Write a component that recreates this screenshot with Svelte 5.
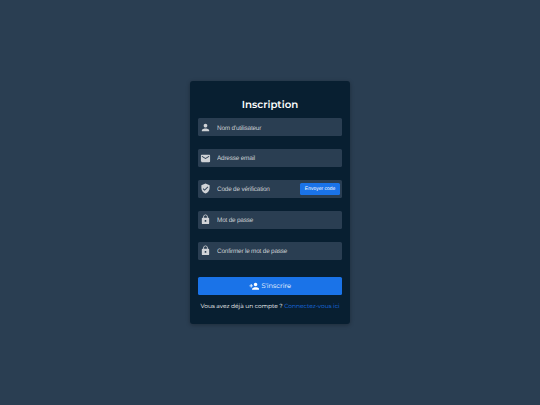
<script lang="ts">
	const icons = {
		person:
			'M12 12c2.21 0 4-1.79 4-4s-1.79-4-4-4-4 1.79-4 4 1.79 4 4 4zm0 2c-2.67 0-8 1.34-8 4v2h16v-2c0-2.66-5.33-4-8-4z',
		mail: 'M20 4H4c-1.1 0-1.99.9-1.99 2L2 18c0 1.1.9 2 2 2h16c1.1 0 2-.9 2-2V6c0-1.1-.9-2-2-2zm0 4l-8 5-8-5V6l8 5 8-5v2z',
		shield:
			'M12 1L3 5v6c0 5.55 3.84 10.74 9 12 5.16-1.26 9-6.45 9-12V5l-9-4zm-2 16l-4-4 1.41-1.41L10 14.17l6.59-6.59L18 9l-8 8z',
		lock: 'M18 8h-1V6c0-2.76-2.24-5-5-5S7 3.24 7 6v2H6c-1.1 0-2 .9-2 2v10c0 1.1.9 2 2 2h12c1.1 0 2-.9 2-2V10c0-1.1-.9-2-2-2zm-6 9c-1.1 0-2-.9-2-2s.9-2 2-2 2 .9 2 2-.9 2-2 2zm3.1-9H8.9V6c0-1.71 1.39-3.1 3.1-3.1 1.71 0 3.1 1.39 3.1 3.1v2z',
		personAdd:
			'M15 12c2.21 0 4-1.79 4-4s-1.79-4-4-4-4 1.79-4 4 1.79 4 4 4zm-9-2V7H4v3H1v2h3v3h2v-3h3v-2H6zm9 4c-2.67 0-8 1.34-8 4v2h16v-2c0-2.66-5.33-4-8-4z'
	};

	const fields = [
		{ name: 'username', type: 'text', label: "Nom d'utilisateur", icon: icons.person },
		{ name: 'email', type: 'email', label: 'Adresse email', icon: icons.mail },
		{ name: 'code', type: 'text', label: 'Code de vérification', icon: icons.shield },
		{ name: 'password', type: 'password', label: 'Mot de passe', icon: icons.lock },
		{ name: 'confirm', type: 'password', label: 'Confirmer le mot de passe', icon: icons.lock }
	];

	let values = $state<Record<string, string>>({});

	function handleSubmit(event: SubmitEvent) {
		event.preventDefault();
	}
</script>

<main class="page">
	<form class="card" onsubmit={handleSubmit}>
		<h1 class="title">Inscription</h1>
		<div class="fields">
			{#each fields as field}
				<div class="field">
					<svg class="icon" viewBox="0 0 24 24"><path d={field.icon} /></svg>
					<input
						type={field.type}
						placeholder={field.label}
						aria-label={field.label}
						bind:value={values[field.name]}
					/>
					{#if field.name === 'code'}
						<button type="button" class="send-code">Envoyer code</button>
					{/if}
				</div>
			{/each}
		</div>
		<button type="submit" class="submit">
			<svg class="icon" viewBox="0 0 24 24"><path d={icons.personAdd} /></svg>
			<span>S'inscrire</span>
		</button>
		<p class="login">Vous avez déjà un compte ? <a href="#login">Connectez-vous ici</a></p>
	</form>
</main>

<style>
	:global(body) {
		background-color: #2a3e52;
	}
	.page {
		min-height: 100vh;
		display: flex;
		align-items: center;
		justify-content: center;
		font-family: Montserrat, Inter, sans-serif;
		text-rendering: geometricPrecision;
	}
	.card {
		box-sizing: border-box;
		width: 160px;
		height: 243px;
		padding: 15.5px 8px 0;
		border-radius: 3px;
		background-color: #081f31;
		box-shadow: 0 1px 4px rgba(0, 0, 0, 0.3);
	}
	.title {
		margin: 0 0 5.9px;
		font-size: 10.2px;
		line-height: 16px;
		font-weight: 600;
		text-align: center;
		color: #fff;
	}
	.fields {
		display: flex;
		flex-direction: column;
		gap: 12.8px;
	}
	.field {
		display: flex;
		align-items: center;
		box-sizing: border-box;
		height: 18px;
		padding: 0 2px;
		border-radius: 1.5px;
		background-color: #2a3e52;
	}
	.icon {
		flex: none;
		width: 11px;
		height: 11px;
		fill: #d0d3d7;
	}
	input {
		flex: 1;
		min-width: 0;
		padding: 1.3px 0 0 6px;
		border: none;
		outline: none;
		background: none;
		color: #fff;
		font: 6.4px 'Liberation Sans', Arial, sans-serif;
		letter-spacing: -0.19px;
		text-rendering: inherit;
	}
	input::placeholder {
		color: #c8ccd1;
		opacity: 1;
	}
	button {
		border: none;
		background-color: #1a73e8;
		color: #fff;
		cursor: pointer;
		text-rendering: inherit;
	}
	.send-code {
		flex: none;
		width: 39.8px;
		height: 11.5px;
		padding: 0;
		border-radius: 1.5px;
		font: 5px 'Liberation Sans', Arial, sans-serif;
		white-space: nowrap;
	}
	.submit {
		display: flex;
		align-items: center;
		justify-content: center;
		gap: 2px;
		width: 100%;
		height: 18.5px;
		margin-top: 17.4px;
		padding: 0;
		border-radius: 1.5px;
		font-family: inherit;
		font-size: 6.7px;
	}
	.submit .icon {
		width: 10.5px;
		height: 10.5px;
		fill: #fff;
	}
	.login {
		margin: 6.2px 0 0;
		font-size: 5.92px;
		line-height: 10px;
		text-align: center;
		white-space: nowrap;
		color: #fff;
	}
	.login a {
		color: #1a73e8;
		text-decoration: none;
	}
</style>
